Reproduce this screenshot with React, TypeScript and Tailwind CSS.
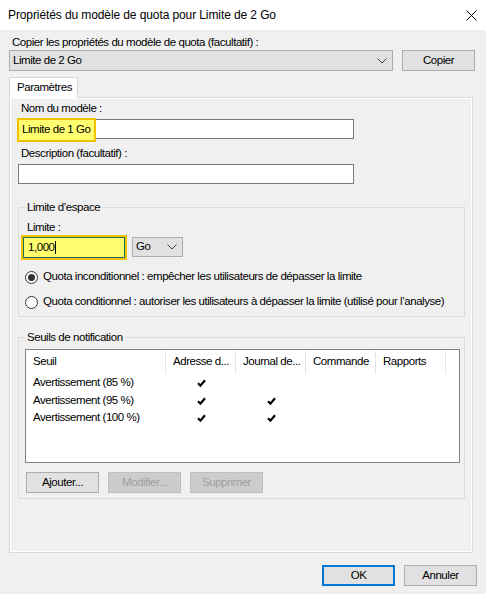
import React from 'react';

const Chevron = () => (
  <svg width="10" height="6" viewBox="0 0 10 6" className="shrink-0">
    <path d="M0.5 0.5 L5 5 L9.5 0.5" fill="none" stroke="#444" strokeWidth="1" />
  </svg>
);

const Check = () => (
  <svg width="9" height="8" viewBox="0 0 9 8">
    <path d="M1 4.2 L3.4 6.6 L8 1.2" fill="none" stroke="#000" strokeWidth="2.2" />
  </svg>
);

const Btn: React.FC<{ label: string; disabled?: boolean; primary?: boolean }> = ({
  label,
  disabled,
  primary,
}) => (
  <button
    className={
      primary
        ? 'w-[73px] h-[21px] border-2 border-[#0078d7] bg-[#e1e1e1] text-black leading-none'
        : disabled
        ? 'w-[73px] h-[21px] border border-[#bfbfbf] bg-[#cccccc] text-[#a0a0a0] leading-none'
        : 'w-[73px] h-[21px] border border-[#adadad] bg-[#e1e1e1] text-black leading-none'
    }
  >
    {label}
  </button>
);

const Radio: React.FC<{ checked?: boolean; label: string }> = ({ checked, label }) => (
  <div className="flex items-center h-[16px] whitespace-nowrap">
    <div className="w-[13px] h-[13px] rounded-full border border-[#333] bg-white flex items-center justify-center ml-[4px] shrink-0">
      {checked && <div className="w-[7px] h-[7px] rounded-full bg-[#333]" />}
    </div>
    <span className="ml-[5px]">{label}</span>
  </div>
);

const rows = [
  { name: 'Avertissement (85 %)', mail: true, log: false },
  { name: 'Avertissement (95 %)', mail: true, log: true },
  { name: 'Avertissement (100 %)', mail: true, log: true },
];

const cols = [
  { label: 'Seuil', w: 'w-[140px]' },
  { label: 'Adresse d...', w: 'w-[70px]' },
  { label: 'Journal de...', w: 'w-[70px]' },
  { label: 'Commande', w: 'w-[70px]' },
  { label: 'Rapports', w: 'w-[70px]' },
];

export default function App() {
  return (
    <div
      className="w-[486px] h-[594px] bg-[#f0f0f0] text-black text-[11.5px] tracking-[-0.45px] overflow-hidden"
      style={{ fontFamily: '"Liberation Sans", Arial, sans-serif' }}
    >
      {/* Title bar */}
      <div className="h-[30px] bg-white flex items-center justify-between pl-[8px] pr-[9px]">
        <span className="text-[12px] tracking-[-0.1px]">Propriétés du modèle de quota pour Limite de 2 Go</span>
        <svg width="11" height="11" viewBox="0 0 11 11">
          <path d="M0.5 0.5 L10.5 10.5 M10.5 0.5 L0.5 10.5" stroke="#000" strokeWidth="1" />
        </svg>
      </div>

      <div className="px-[9px] pt-[5px]">
        <div className="leading-[15px] pl-[3px]">Copier les propriétés du modèle de quota (facultatif) :</div>

        <div className="flex gap-[9px] h-[21px]">
          <div className="w-[384px] h-[21px] border border-[#adadad] bg-[#e1e1e1] flex items-center justify-between pl-[3px] pr-[5px]">
            <span>Limite de 2 Go</span>
            <Chevron />
          </div>
          <Btn label="Copier" />
        </div>

        {/* Tabs */}
        <div className="mt-[6px] flex">
          <div className="w-[69px] h-[21px] bg-white border border-b-0 border-[#d9d9d9] pl-[7px] flex items-center relative z-10 -mb-px">
            Paramètres
          </div>
        </div>

        <div className="w-[464px] h-[456px] border border-[#d9d9d9]">
          <div className="h-full border border-white pl-[7px] pt-[2px]">
            <div className="leading-[15px] pl-[3px]">Nom du modèle :</div>
            <div className="relative mt-[3px] w-[336px] h-[20px] border border-[#7a7a7a] bg-white">
              <div className="absolute -left-[2px] -top-[2px] w-[79px] h-[24px] border-2 border-[#f2c200] bg-[#ffff70] flex items-center pl-[3px] whitespace-nowrap">
                Limite de 1 Go
              </div>
            </div>

            <div className="leading-[15px] pl-[3px] mt-[7px]">Description (facultatif) :</div>
            <div className="mt-[3px] w-[336px] h-[20px] border border-[#7a7a7a] bg-white" />

            {/* Limite d'espace */}
            <fieldset className="mt-[16px] w-[447px] h-[117px] border border-[#dcdcdc] pl-[2px] pt-[5px]">
              <legend className="ml-[4px] px-[2px] leading-[15px]">Limite d’espace</legend>
              <div className="leading-[15px] ml-[6px]">Limite :</div>
              <div className="flex items-start">
                <div className="w-[106px] h-[25px] border-2 border-[#f2c200] bg-[#ffff70]">
                  <div className="w-[102px] h-[21px] border border-[#1e6e5a] flex items-center pl-[4px]">
                    1,000<span className="inline-block w-px h-[13px] bg-black" />
                  </div>
                </div>
                <div className="ml-[5px] mt-[2px] w-[51px] h-[20px] border border-[#adadad] bg-[#e1e1e1] flex items-center justify-between pl-[3px] pr-[5px]">
                  <span>Go</span>
                  <Chevron />
                </div>
              </div>
              <div className="mt-[9px] flex flex-col gap-[9px]">
                <Radio checked label="Quota inconditionnel : empêcher les utilisateurs de dépasser la limite" />
                <Radio label="Quota conditionnel : autoriser les utilisateurs à dépasser la limite (utilisé pour l’analyse)" />
              </div>
            </fieldset>

            {/* Seuils de notification */}
            <fieldset className="mt-[13px] w-[447px] h-[169px] border border-[#dcdcdc] pl-[6px] pt-[4px]">
              <legend className="px-[2px] leading-[15px]">Seuils de notification</legend>
              <div className="w-[435px] h-[114px] border border-[#828282] bg-white">
                <div className="flex h-[24px]">
                  {cols.map((c) => (
                    <div key={c.label} className={`${c.w} h-[24px] flex items-center pl-[7px]`}>
                      <span className="flex-1 whitespace-nowrap overflow-hidden">{c.label}</span>
                      <span className="w-px h-[23px] mt-[1px] bg-[#e5e5e5] shrink-0" />
                    </div>
                  ))}
                </div>
                {rows.map((r) => (
                  <div key={r.name} className="flex h-[17px] items-center mt-[0.5px]">
                    <div className="w-[140px] pl-[7px] whitespace-nowrap">{r.name}</div>
                    <div className="w-[70px] flex justify-center">{r.mail && <Check />}</div>
                    <div className="w-[70px] flex justify-center">{r.log && <Check />}</div>
                  </div>
                ))}
              </div>
              <div className="mt-[9px] flex gap-[9px] pl-[1px]">
                <Btn label="Ajouter..." />
                <Btn label="Modifier..." disabled />
                <Btn label="Supprimer" disabled />
              </div>
            </fieldset>
          </div>
        </div>

        <div className="mt-[12px] flex justify-end gap-[9px]">
          <Btn label="OK" primary />
          <Btn label="Annuler" />
        </div>
      </div>
    </div>
  );
}
